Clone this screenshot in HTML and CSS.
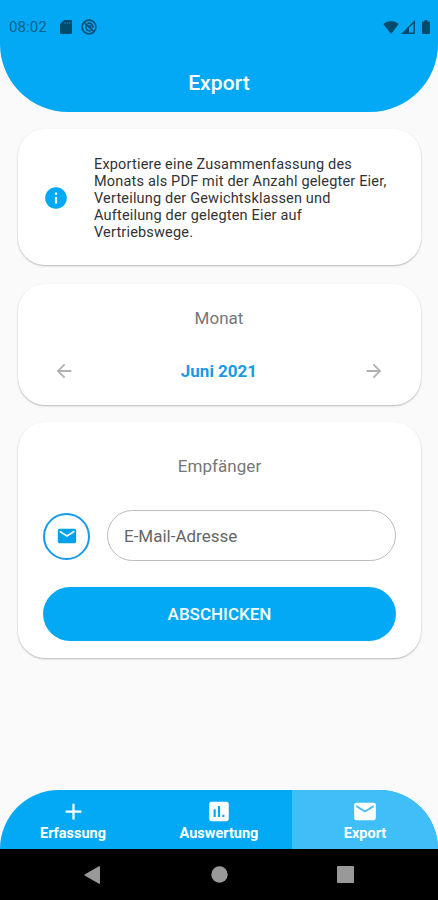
FILE: index.html
```html
<!doctype html>
<html lang="de">
<head>
	<meta charset="UTF-8">
	<meta name="viewport" content="width=device-width">
	<title>Export</title>
	<link rel="stylesheet" href="styles.css">
</head>
<body>

<header class="header">
	<div class="status">
		<span class="time">08:02</span>
		<svg class="sd" width="12" height="14" viewBox="0 0 12 14"><path d="M4 0h7q1 0 1 1v12q0 1-1 1H1q-1 0-1-1V4z"/><path class="slot" d="M5 2v2M7.3 2v2M9.6 2v2"/></svg>
		<svg class="sync" width="16" height="16" viewBox="0 0 16 16"><circle cx="8" cy="8" r="6.9"/><path d="M3.6 3.8l9 8.6M5.4 6.2A3.6 3.6 0 0 0 8 11.8h1.6M6.4 4.5A3.7 3.7 0 0 1 11.5 9M7 7h2.2v2.2"/></svg>
		<span class="space"></span>
		<svg class="wifi" width="16" height="13" viewBox="0 0 16 13"><path d="M8 13L.3 3Q3.500 0 8 0t7.700 3z"/></svg>
		<svg class="signal" width="14" height="14" viewBox="0 0 14 14"><path d="M0 14L14 0v14zM8 7.800V12.500h4.500V3.500z" fill-rule="evenodd"/></svg>
		<svg class="battery" width="8" height="14" viewBox="0 0 8 14"><path d="M2.500 0h3v1.400H7q1 0 1 1V13q0 1-1 1H1q-1 0-1-1V2.400q0-1 1-1h1.500z"/></svg>
	</div>
	<h1>Export</h1>
</header>

<main class="content">
	<section class="card info">
		<svg class="info-icon" width="26" height="26" viewBox="0 0 24 24"><path d="M12 2C6.480 2 2 6.480 2 12s4.480 10 10 10 10-4.480 10-10S17.520 2 12 2zm1 15h-2v-6h2v6zm0-8h-2V7h2v2z"/></svg>
		<p>Exportiere eine Zusammenfassung des<br>Monats als PDF mit der Anzahl gelegter Eier,<br>Verteilung der Gewichtsklassen und<br>Aufteilung der gelegten Eier auf<br>Vertriebswege.</p>
	</section>

	<section class="card month">
		<h2>Monat</h2>
		<div class="picker">
			<svg width="22" height="22" viewBox="0 0 24 24"><path d="M20 11H7.830l5.590-5.590L12 4l-8 8 8 8 1.410-1.410L7.830 13H20v-2z"/></svg>
			<strong>Juni 2021</strong>
			<svg width="22" height="22" viewBox="0 0 24 24"><path d="M12 4l-1.410 1.410L16.170 11H4v2h12.170l-5.580 5.590L12 20l8-8z"/></svg>
		</div>
	</section>

	<section class="card recipient">
		<h2>Empfänger</h2>
		<div class="row">
			<span class="round">
				<svg width="22" height="22" viewBox="0 0 24 24"><path d="M20 4H4c-1.100 0-1.990.9-1.990 2L2 18c0 1.100.9 2 2 2h16c1.100 0 2-.9 2-2V6c0-1.100-.9-2-2-2zm0 4l-8 5-8-5V6l8 5 8-5v2z"/></svg>
			</span>
			<input type="email" class="mail" placeholder="E-Mail-Adresse">
		</div>
		<button class="send">ABSCHICKEN</button>
	</section>
</main>

<nav class="tabs">
	<a class="tab">
		<svg width="27" height="27" viewBox="0 0 24 24"><path d="M19 13h-6v6h-2v-6H5v-2h6V5h2v6h6v2z"/></svg>
		<span>Erfassung</span>
	</a>
	<a class="tab">
		<svg width="26" height="26" viewBox="0 0 24 24"><path d="M19 3H5c-1.100 0-2 .9-2 2v14c0 1.100.9 2 2 2h14c1.100 0 2-.9 2-2V5c0-1.100-.9-2-2-2zM9 17H7v-7h2v7zm4 0h-2V7h2v10zm4 0h-2v-2h2v2z"/></svg>
		<span>Auswertung</span>
	</a>
	<a class="tab active">
		<svg width="26" height="26" viewBox="0 0 24 24"><path d="M20 4H4c-1.100 0-1.990.9-1.990 2L2 18c0 1.100.9 2 2 2h16c1.100 0 2-.9 2-2V6c0-1.100-.9-2-2-2zm0 4l-8 5-8-5V6l8 5 8-5v2z"/></svg>
		<span>Export</span>
	</a>
</nav>

<footer class="system">
	<svg width="17" height="20" viewBox="0 0 17 20"><path d="M1 9.200L15 1.300q1-.5 1 .7v16q0 1.200-1 .7L1 10.800q-1.200-.8 0-1.600z"/></svg>
	<svg width="17" height="17" viewBox="0 0 17 17"><circle cx="8.500" cy="8.500" r="8.200"/></svg>
	<svg width="17" height="17" viewBox="0 0 17 17"><rect width="17" height="17" rx="1"/></svg>
</footer>

</body>
</html>
```
FILE: styles.css
```css
* {
	box-sizing: border-box;
}
body {
	display: flex;
	flex-direction: column;
	height: 900px;
	margin: 0;
	background: #fafafa;
	color: #333;
	font-family: Roboto, sans-serif;
}
h1, h2, p {
	margin: 0;
}
.header {
	height: 112px;
	padding-top: 15px;
	background: #03a9f4;
	border-radius: 0 0 68px 68px;
}
.header h1 {
	margin-top: 31px;
	color: #fff;
	font-size: 21px;
	font-weight: 500;
	letter-spacing: .1px;
	line-height: 26px;
	text-align: center;
}
.status {
	display: flex;
	align-items: center;
	height: 24px;
	padding: 0 8px 0 9px;
	fill: #024b6c;
}
.time {
	width: 51px;
	color: #04628d;
	font-size: 15px;
	letter-spacing: .1px;
}
.slot {
	stroke: #03a9f4;
	stroke-width: .6;
}
.sync {
	margin-left: 9px;
	fill: none;
	stroke: #04547a;
	stroke-width: 1.7;
}
.space {
	flex: 1;
}
.signal {
	margin: 0 7px 0 2px;
}
.content {
	display: flex;
	flex: 1;
	flex-direction: column;
	gap: 18px;
	padding: 17px 17px 0 18px;
}
.card {
	background: #fff;
	border-radius: 27px;
	box-shadow: 0 1px 2px rgba(0, 0, 0, .27);
}
.info {
	display: flex;
	align-items: center;
	height: 136px;
	padding: 1px 25px 0;
}
.info-icon {
	margin-right: 25px;
	fill: #03a9f4;
}
.info p {
	padding-top: 2px;
	font-size: 14.500px;
	letter-spacing: .18px;
	line-height: 17px;
	white-space: nowrap;
}
.card h2 {
	color: #777;
	font-size: 17px;
	font-weight: 400;
	letter-spacing: .05px;
	line-height: 20px;
	text-align: center;
}
.month {
	height: 121px;
	margin-top: 1px;
	padding: 24px 36px 0 35px;
}
.picker {
	display: flex;
	align-items: center;
	justify-content: space-between;
	height: 24px;
	margin-top: 31px;
	fill: #b0b0b0;
}
.picker strong {
	color: #189ae8;
	font-size: 17px;
	font-weight: 700;
}
.recipient {
	height: 236px;
	margin-top: -1px;
	padding: 34px 25px 0;
}
.row {
	display: flex;
	align-items: center;
	gap: 17px;
	margin: 34px 0 26px;
}
.round {
	display: flex;
	align-items: center;
	justify-content: center;
	width: 47px;
	height: 47px;
	margin-top: 1px;
	border: 2px solid #189ae8;
	border-radius: 50%;
	fill: #03a0ee;
}
.mail {
	flex: 1;
	min-width: 0;
	height: 51px;
	padding: 0 16px;
	background: #fff;
	border: 1px solid #bbb;
	border-radius: 26px;
	font: 17px Roboto, sans-serif;
}
.mail::placeholder {
	color: #666;
}
.send {
	display: block;
	width: 100%;
	height: 54px;
	padding: 0;
	background: #03a9f4;
	border: 0;
	border-radius: 27px;
	color: #fff;
	font: 500 17px Roboto, sans-serif;
}
.tabs {
	display: flex;
	height: 59px;
	overflow: hidden;
	background: #03a9f4;
	border-radius: 59px 59px 0 0;
}
.tab {
	display: flex;
	flex: 1;
	flex-direction: column;
	align-items: center;
	color: #fff;
	fill: #fff;
	font-size: 14.500px;
	font-weight: 700;
	line-height: 18px;
}
.tab svg {
	height: 27px;
	margin-top: 8px;
}
.active {
	background: #40bef7;
}
.system {
	display: flex;
	align-items: center;
	justify-content: space-between;
	height: 51px;
	padding: 0 84px;
	background: #000;
	fill: #999;
}
```
